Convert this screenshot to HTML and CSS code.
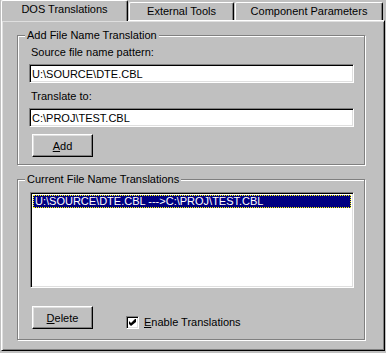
FILE: index.html
```html
<!DOCTYPE html>
<html>
<head>
<meta charset="UTF-8">
<title>DOS Translations</title>
<link rel="stylesheet" href="styles.css">
</head>
<body>
<div class="dialog">
  <div class="tabs">
    <div class="tab tab-active">DOS Translations</div>
    <div class="tab tab-ext">External Tools</div>
    <div class="tab tab-comp">Component Parameters</div>
  </div>
  <div class="panel">
    <fieldset class="group group-add">
      <legend>Add File Name Translation</legend>
      <label class="field-label" for="src">Source file name pattern:</label>
      <input class="edit" id="src" type="text" value="U:\SOURCE\DTE.CBL">
      <label class="field-label field-label-2" for="dst">Translate to:</label>
      <input class="edit" id="dst" type="text" value="C:\PROJ\TEST.CBL">
      <button class="btn btn-add"><u>A</u>dd</button>
    </fieldset>

    <fieldset class="group group-list">
      <legend>Current File Name Translations</legend>
      <div class="listbox">
        <div class="list-item selected">U:\SOURCE\DTE.CBL ---&gt;C:\PROJ\TEST.CBL</div>
      </div>
      <div class="button-row">
        <button class="btn"><u>D</u>elete</button>
        <label class="check">
          <span class="check-box"><svg width="7" height="7" viewBox="0 0 7 7"><polygon points="0,2 2,4 6,0 7,0 7,3 2,7 0,5" fill="#000"/></svg></span>
          <span><u>E</u>nable Translations</span>
        </label>
      </div>
    </fieldset>
  </div>
</div>
</body>
</html>
```

FILE: styles.css
```css
/* Win95-style property sheet */
body {
    margin: 0;
    background: #c0c0c0;
    font-family: "Liberation Sans", Arial, sans-serif;
    font-size: 11px;
    color: #000;
}
.dialog {
    width: 386px;
    height: 353px;
    padding-left: 1px;
    box-sizing: border-box;
}

/* tab strip */
.tabs {
    display: flex;
    align-items: flex-end;
    height: 20px;
}
.tab {
    box-sizing: border-box;
    height: 18px;
    padding-top: 2px;
    line-height: 13px;
    text-align: center;
    white-space: nowrap;
    background: #c0c0c0;
    border-top: 1px solid #fff;
    border-left: 1px solid #fff;
    border-right: 1px solid #000;
    border-radius: 2px 2px 0 0;
    box-shadow: inset -1px 0 0 #808080;
}
.tab-active {
    position: relative;
    z-index: 1;
    width: 127px;
    height: 21px;
    margin-bottom: -1px;
}
.tab-ext {
    width: 105px;
    margin-left: 1px;
}
.tab-comp {
    width: 148px;
    margin-left: 1px;
}

/* sheet */
.panel {
    box-sizing: border-box;
    width: 384px;
    height: 331px;
    padding: 8px 0 0 15px;
    border: 1px solid;
    border-color: #fff #000 #000 #fff;
    box-shadow: inset 1px 1px 0 #dfdfdf, inset -1px -1px 0 #808080;
}

/* etched group boxes */
.group {
    box-sizing: border-box;
    width: 348px;
    min-width: 0;
    margin: 0;
    padding: 4px 10px 7px 11px;
    border: 1px solid #808080;
    box-shadow: 1px 1px 0 #fff, inset 1px 1px 0 #fff;
}
.group legend {
    padding: 0 2px;
    margin-left: -4px;
    line-height: 13px;
    background: #c0c0c0;
}
.group-list {
    margin-top: 8px;
    padding: 6px 10px 10px 11px;
}

.field-label {
    display: block;
    line-height: 13px;
    padding-left: 2px;
}
.field-label-2 {
    margin-top: 7px;
}

.edit {
    display: block;
    box-sizing: border-box;
    width: 325px;
    height: 19px;
    margin: 5px 0 0;
    padding: 0 2px;
    font: inherit;
    color: #000;
    background: #fff;
    border: 1px solid;
    border-color: #808080 #fff #fff #808080;
    box-shadow: inset 1px 1px 0 #000, inset -1px -1px 0 #dfdfdf;
    outline: none;
}

.btn {
    display: block;
    box-sizing: border-box;
    width: 61px;
    height: 23px;
    padding: 0;
    font: inherit;
    color: #000;
    background: #c0c0c0;
    border: 1px solid;
    border-color: #fff #000 #000 #fff;
    box-shadow: inset -1px -1px 0 #808080, inset 1px 1px 0 #dfdfdf;
}
.btn-add {
    margin: 7px 0 0 3px;
}

/* list */
.listbox {
    box-sizing: border-box;
    width: 324px;
    height: 96px;
    margin-left: 1px;
    background: #fff;
    border: 1px solid;
    border-color: #808080 #fff #fff #808080;
    box-shadow: inset 1px 1px 0 #000, inset -1px -1px 0 #dfdfdf;
    padding: 2px;
}
.list-item {
    height: 13px;
    line-height: 13px;
    padding-left: 2px;
    white-space: nowrap;
}
.selected {
    background: #000080;
    color: #fff;
    outline: 1px dotted #ffff00;
    outline-offset: -1px;
}

.button-row {
    display: flex;
    align-items: flex-end;
    margin-top: 18px;
    padding-left: 3px;
}
.check {
    display: flex;
    align-items: center;
    gap: 5px;
    margin-left: 33px;
    line-height: 13px;
}
.check-box {
    box-sizing: border-box;
    width: 13px;
    height: 13px;
    display: flex;
    align-items: center;
    justify-content: center;
    background: #fff;
    border: 1px solid;
    border-color: #808080 #fff #fff #808080;
    box-shadow: inset 1px 1px 0 #000, inset -1px -1px 0 #dfdfdf;
}
```
